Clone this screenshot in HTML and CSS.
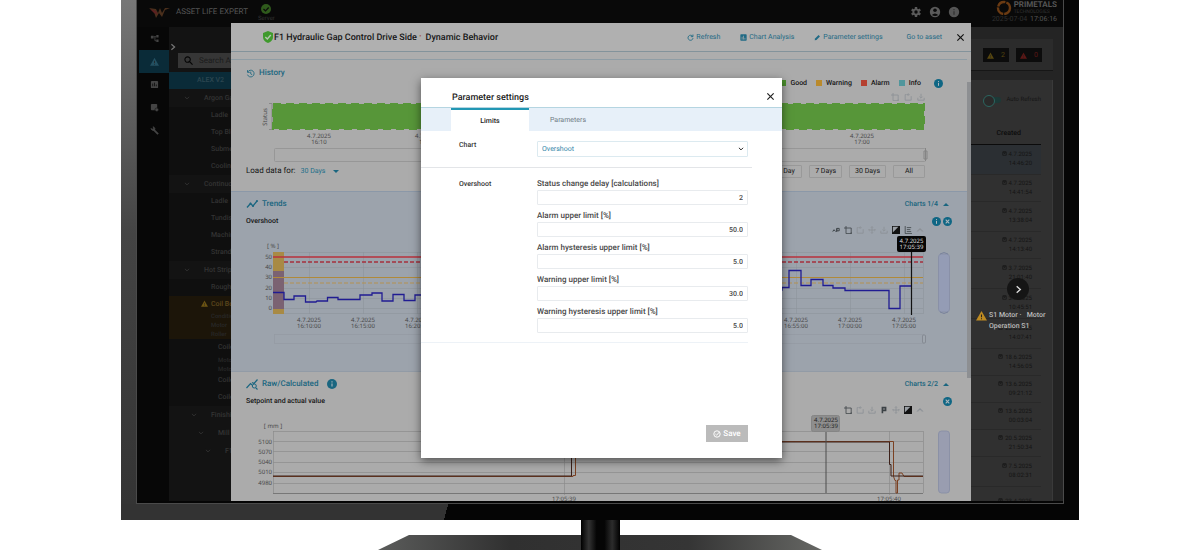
FILE: index.html
```html
<!DOCTYPE html>
<html lang="en">
<head>
<meta charset="utf-8">
<title>Asset Life Expert</title>
<link rel="stylesheet" href="styles.css">
</head>
<body>
<svg class="sprite" aria-hidden="true">
  <symbol id="close" viewBox="0 0 10 10"><path d="M1.5 1.5l7 7m0-7l-7 7" fill="none" stroke="currentColor" stroke-width="1.3"/></symbol>
  <symbol id="closec" viewBox="0 0 10 10"><circle cx="5" cy="5" r="5" fill="currentColor"/><path d="M3 3l4 4m0-4l-4 4" stroke="#b0b8bd" stroke-width="1.2"/></symbol>
  <symbol id="info" viewBox="0 0 10 10"><circle cx="5" cy="5" r="5" fill="currentColor"/><path d="M5 4.4v3.2M5 2.3v1.2" stroke="#b0b8bd" stroke-width="1.1"/></symbol>
  <symbol id="warn" viewBox="0 0 12 12"><path d="M6 1l6 10.500H0z" fill="currentColor"/><path d="M6 5v3M6 9v1.200" stroke="#222" stroke-width="1.100"/></symbol>
  <symbol id="chev" viewBox="0 0 10 10"><path d="M3 1.500L7 5 3 8.500" fill="none" stroke="currentColor" stroke-width="1.500"/></symbol>
  <symbol id="down" viewBox="0 0 10 10"><path d="M1.500 3L5 6.500 8.500 3" fill="none" stroke="currentColor" stroke-width="1.500"/></symbol>
  <symbol id="zoomin" viewBox="0 0 10 10"><path d="M2.500 0v9.500H9V2.500H0M9 8v2" fill="none" stroke="currentColor"/></symbol>
  <symbol id="zoomout" viewBox="0 0 10 10"><path d="M3 2H1.500v7H9V4M4 2h3M5.500 .5L4 2l1.500 1.500" fill="none" stroke="currentColor"/></symbol>
  <symbol id="save" viewBox="0 0 10 10"><path d="M5 1v5M3 4.500L5 6.500l2-2M1 6v3h8V6" fill="none" stroke="currentColor"/></symbol>
  <symbol id="pan" viewBox="0 0 10 10"><path d="M5 1v8M1 5h8M3.800 2L5 .8 6.200 2M3.800 8L5 9.200 6.200 8M2 3.800L.8 5 2 6.200M8 3.800L9.200 5 8 6.200" fill="none" stroke="currentColor"/></symbol>
  <symbol id="contrast" viewBox="0 0 10 10"><rect width="10" height="10" fill="currentColor"/><path d="M1 1h7L1 8z" fill="#9a9fa5"/></symbol>
  <symbol id="list" viewBox="0 0 10 10"><path d="M1.500 0v9.500H10M3.500 2H9M3.500 4.500H8M3.500 7H9" fill="none" stroke="currentColor"/></symbol>
  <symbol id="up" viewBox="0 0 10 10"><path d="M5 2.500L9.500 7H7V6L5 5 3 6v1H.5z" fill="currentColor"/></symbol>
  <symbol id="link" viewBox="0 0 10 10"><path d="M1 7q1-4 3-1t2-3h3v3H6M6 3v4" fill="none" stroke="currentColor" stroke-width="1.200"/></symbol>
  <symbol id="flag" viewBox="0 0 10 10"><path d="M3 9V2h4v3.500H4" fill="none" stroke="currentColor" stroke-width="2"/></symbol>
  <symbol id="cal" viewBox="0 0 10 10"><path d="M1.500 2.500h7v6h-7zM1.500 1.500h7M3.500 5h3" fill="none" stroke="currentColor" stroke-width="1.500"/></symbol>
  <symbol id="trend" viewBox="0 0 12 12"><path d="M1 9.500l3.500-4 2.500 2.500 4-5" fill="none" stroke="currentColor" stroke-width="1.300"/><circle cx="4.500" cy="5.500" r="1" fill="currentColor"/><circle cx="7" cy="8" r="1" fill="currentColor"/><circle cx="11" cy="3" r="1" fill="currentColor"/></symbol>
  <symbol id="raw" viewBox="0 0 12 12"><path d="M.5 10l4-4.500L6 7M6 4.500l2 1 3.500-4M9.800 9.800L11.500 11.500" fill="none" stroke="currentColor" stroke-width="1.200"/><circle cx="8.300" cy="8" r="2" fill="none" stroke="currentColor"/></symbol>
</svg>

<main class="stage">
  <div class="monitor">
    <div class="screen">
      <div class="app">
        <header class="topbar">
          <svg class="brand-mark" viewBox="0 0 22 14"><path d="M0 3l7 1 2 4 2-5 2 5 3-5h5l-5 2-3 7-3-4-3 5-2-6z" fill="#4a2f1c"/><path d="M1 4l6 2 2 4-4-2z" fill="#5c2020"/></svg>
          <h1 class="brand">ASSET LIFE EXPERT</h1>
          <div class="server"><svg viewBox="0 0 10 10"><circle cx="5" cy="5" r="5" fill="#2f5a1c"/><path d="M2.500 5l2 2 3.200-3.500" fill="none" stroke="#0c0c0c" stroke-width="1.200"/></svg><span>Server</span></div>
          <nav class="top-icons">
            <button aria-label="Settings"><svg viewBox="0 0 12 12"><path d="M6 1v10M1.700 3.500l8.600 5M1.700 8.500l8.600-5" stroke="#5a5a5a" stroke-width="2.400"/><circle cx="6" cy="6" r="3.600" fill="#5a5a5a"/><circle cx="6" cy="6" r="1.700" fill="#0a0a0a"/></svg></button>
            <button aria-label="Account"><svg viewBox="0 0 12 12"><circle cx="6" cy="6" r="5.200" fill="#5a5a5a"/><circle cx="6" cy="4.300" r="1.800" fill="#0a0a0a"/><path d="M2.800 9q3.200-3 6.400 0-3 2-6.400 0" fill="#0a0a0a"/></svg></button>
            <button aria-label="Information"><svg viewBox="0 0 12 12"><circle cx="6" cy="6" r="5.200" fill="#555"/><path d="M6 5.300v3.500M6 3v1.300" stroke="#333" stroke-width="1.300"/></svg></button>
          </nav>
          <div class="company">
            <div class="company-row"><svg viewBox="0 0 16 16"><circle cx="8" cy="8" r="6" fill="none" stroke="#6a3a12" stroke-width="2.400" stroke-dasharray="9 1"/></svg><div><b>PRIMETALS</b><small>TECHNOLOGIES</small></div></div>
            <time><span>2025-07-04</span> 17:06:16</time>
          </div>
        </header>
        <div class="workspace">
          <nav class="rail">
            <button aria-label="Structure"><svg viewBox="0 0 10 10"><path d="M1 2h3v3H1zM7 1h2.500v3H7zM7 6h2.500v3H7z" fill="currentColor"/><path d="M4 3h3M5.500 3v4.500H7" fill="none" stroke="currentColor"/></svg></button>
            <button class="on" aria-label="Alarms"><svg viewBox="0 0 12 12"><use href="#warn"/></svg></button>
            <button aria-label="Reports"><svg viewBox="0 0 10 10"><rect x="1" y="1" width="8" height="8" rx="1" fill="currentColor"/><path d="M3 4v3M5 3v4M7 5v2" stroke="#111"/></svg></button>
            <button aria-label="Documents"><svg viewBox="0 0 10 10"><rect x="1" y="1" width="7" height="7" rx="1" fill="currentColor"/><circle cx="7.500" cy="7.500" r="2" fill="currentColor" stroke="#111" stroke-width=".6"/></svg></button>
            <button aria-label="Tools"><svg viewBox="0 0 10 10"><path d="M4 4l5 5" stroke="currentColor" stroke-width="2"/><path d="M1 3l2 2 2-.5.500-2L3.500 .8 4 2.500 3 3.500z" fill="currentColor" stroke="currentColor"/></svg></button>
          </nav>
          <aside class="tree">
            <svg class="expand"><use href="#chev"/></svg>
            <label class="search"><svg viewBox="0 0 10 10"><circle cx="4" cy="4" r="3" fill="none" stroke="#050505" stroke-width="1.200"/><path d="M6.200 6.200L9.500 9.500" stroke="#050505" stroke-width="1.300"/></svg><input type="search" placeholder="Search Asset" aria-label="Search Asset"></label>
            <ul class="nodes">
              <li class="sel">ALEX V2</li>
              <li class="group"><svg><use href="#down"/></svg>Argon Gas</li>
              <li>Ladle</li><li>Top Blow</li><li>Submerged</li><li>Cooling</li>
              <li class="group"><svg><use href="#down"/></svg>Continuous</li>
              <li>Ladle</li><li>Tundish</li><li>Machine</li><li>Strand</li>
              <li class="group"><svg><use href="#down"/></svg>Hot Strip</li>
              <li>Roughing</li>
              <li class="alert"><strong><svg><use href="#warn"/></svg>Coil Box</strong><span>Condition</span><span>Motor</span><span>Roller</span></li>
              <li class="deep multi">Coiler<span>Motor</span><span>Motor</span></li>
              <li class="deep">Coiler</li><li class="deep">Coiler</li>
              <li class="group g2"><svg><use href="#down"/></svg>Finishing</li>
              <li class="group g3"><svg><use href="#down"/></svg>Mill</li>
              <li class="group g4"><svg><use href="#down"/></svg>F1</li>
            </ul>
          </aside>
          <section class="events">
            <div class="counts"><span class="count yellow"><svg><use href="#warn"/></svg>2</span><span class="count red"><svg><use href="#warn"/></svg>0</span></div>
            <div class="event-card">
              <label class="toggle"><input type="checkbox" role="switch">Auto Refresh</label>
              <table>
                <thead><tr><th scope="col">Created</th></tr></thead>
                <tbody>
                  <tr class="tall first"><td><svg><use href="#cal"/></svg>4.7.2025<br>14:46:20</td></tr>
                  <tr><td><svg><use href="#cal"/></svg>4.7.2025<br>14:41:54</td></tr>
                  <tr class="tall"><td><svg><use href="#cal"/></svg>4.7.2025<br>13:38:04</td></tr>
                  <tr><td><svg><use href="#cal"/></svg>4.7.2025<br>14:13:40</td></tr>
                  <tr class="tall"><td><svg><use href="#cal"/></svg>3.7.2025<br>21:01:40</td></tr>
                  <tr class="tall"><td><svg><use href="#cal"/></svg>3.7.2025<br>10:45:51</td></tr>
                  <tr class="tall"><td><svg><use href="#cal"/></svg>25.6.2025<br>14:07:41</td></tr>
                  <tr><td><svg><use href="#cal"/></svg>18.6.2025<br>14:56:05</td></tr>
                  <tr><td><svg><use href="#cal"/></svg>13.6.2025<br>09:21:12</td></tr>
                  <tr><td><svg><use href="#cal"/></svg>13.6.2025<br>00:03:04</td></tr>
                  <tr><td><svg><use href="#cal"/></svg>20.5.2025<br>21:50:34</td></tr>
                  <tr class="tall"><td><svg><use href="#cal"/></svg>7.5.2025<br>08:02:31</td></tr>
                  <tr class="tall"><td><svg><use href="#cal"/></svg>23.4.2025</td></tr>
                </tbody>
              </table>
            </div>
          </section>
        </div>
      </div>

      <section class="behavior">
        <header class="behavior-head">
          <svg class="shield" viewBox="0 0 12 12"><path d="M6 0l5 2v4q0 4-5 6-5-2-5-6V2z" fill="#3f9a2c"/><path d="M3.300 6l2 2 3.500-4" fill="none" stroke="#b5c7b0" stroke-width="1.400"/></svg>
          <h2>F1 Hydraulic Gap Control Drive Side <i>•</i> Dynamic Behavior</h2>
          <div class="actions">
            <button><svg viewBox="0 0 10 10"><path d="M8 3.300A3.600 3.600 0 1 0 8.600 6M8.500 .8v3H5.500" fill="none" stroke="currentColor" stroke-width="1.300"/></svg>Refresh</button>
            <button><svg viewBox="0 0 10 10"><rect x=".5" y=".5" width="9" height="9" rx="1" fill="currentColor"/><path d="M3 4v4M5 2.500V8M7 5.500V8" stroke="#acacac"/></svg>Chart Analysis</button>
            <button><svg viewBox="0 0 10 10"><path d="M1 9l.5-2.500 5-5 2 2-5 5z" fill="currentColor"/></svg>Parameter settings</button>
            <a href="#asset">Go to asset</a>
            <button class="x" aria-label="Close"><svg><use href="#close"/></svg></button>
          </div>
        </header>
        <div class="behavior-body">
          <div class="sections">
            <section class="history">
              <div class="head">
                <h3><svg viewBox="0 0 12 12"><path d="M2.300 4A4.500 4.500 0 1 1 2 7.500M2 1.500V4.500h3M6.300 3.500v3l2 1.200" fill="none" stroke="currentColor" stroke-width="1.100"/></svg>History</h3>
                <ul class="legend"><li class="good">Good</li><li class="warning">Warning</li><li class="alarm">Alarm</li><li class="inf">Info</li><li class="plain"><svg><use href="#info"/></svg></li></ul>
              </div>
              <div class="tools pale"><button aria-label="Zoom"><svg><use href="#zoomin"/></svg></button><button aria-label="Reset zoom"><svg><use href="#zoomout"/></svg></button><button aria-label="Save image"><svg><use href="#save"/></svg></button></div>
              <svg class="chart" viewBox="231 102 736 62">
                <text x="267" y="117" transform="rotate(-90 267 117)" text-anchor="middle">Status</text>
                <path d="M269 103.500h3v26h-3" fill="none" stroke="#888"/>
                <rect x="273" y="104" width="651" height="25" fill="#579639"/>
                <path d="M273 104h651v25H273z" fill="none" stroke="#579639" stroke-width="2" stroke-dasharray="8 5"/>
                <g text-anchor="middle"><text x="319" y="138">4.7.2025</text><text x="319" y="144">16:10</text><text x="427" y="138">4.7.2025</text><text x="427" y="144">16:20</text><text x="862" y="138">4.7.2025</text><text x="862" y="144">17:00</text></g>
                <rect x="274.500" y="148.500" width="651" height="13" rx="1" fill="none" stroke="#979797"/>
                <path d="M925.500 148v13M924 151h3v8h-3z" fill="#aaa" stroke="#858585"/>
              </svg>
              <div class="load"><label for="span">Load data for:</label><select id="span"><option>30 Days</option></select><i class="tri dn"></i><span class="ranges"><button>1 Day</button><button>7 Days</button><button>30 Days</button><button>All</button></span></div>
            </section>

            <section class="trends">
              <div class="head"><h3><svg><use href="#trend"/></svg>Trends</h3><button class="fold">Charts 1/4<i class="tri"></i></button></div>
              <div class="sub"><h4>Overshoot</h4><button aria-label="Information"><svg><use href="#info"/></svg></button><button aria-label="Remove"><svg><use href="#closec"/></svg></button></div>
              <div class="tools"><button aria-label="Link"><svg><use href="#link"/></svg></button><button aria-label="Zoom"><svg><use href="#zoomin"/></svg></button><button class="off" aria-label="Reset"><svg><use href="#zoomout"/></svg></button><button class="off" aria-label="Pan"><svg><use href="#pan"/></svg></button><button class="off" aria-label="Save"><svg><use href="#save"/></svg></button><button class="on" aria-label="Contrast"><svg><use href="#contrast"/></svg></button><button aria-label="List"><svg><use href="#list"/></svg></button><button class="off" aria-label="Up"><svg><use href="#up"/></svg></button></div>
              <svg class="chart" viewBox="231 235 736 112">
                <g text-anchor="middle"><text x="273" y="248">[ % ]</text></g>
                <g text-anchor="end"><text x="272" y="259">50</text><text x="272" y="269">40</text><text x="272" y="279">30</text><text x="272" y="290">20</text><text x="272" y="300">10</text><text x="272" y="310">0</text></g>
                <path d="M273 252.500h650M273 267.500h650M273 288.500h650M273 298.500h650M273 308.500h650M273 313.500h650M309.500 252v62M363.500 252v62M417.500 252v62M796.500 252v62M850.500 252v62M904.500 252v62M923.500 252v62" fill="none" stroke="#8d949c" stroke-width=".6"/>
                <rect x="273" y="252" width="11" height="62" fill="#a88a45"/><rect x="273" y="271" width="11" height="38" fill="#7b6272"/>
                <path d="M273 257h650" stroke="#b8303c" stroke-width="1.500"/><path d="M284 262h639" stroke="#a5303c" stroke-width="1.300" stroke-dasharray="4 2"/>
                <path d="M273 277.500h650" stroke="#b08a3a" stroke-width="1.200"/><path d="M284 283h639" stroke="#b39150" stroke-width="1.200" stroke-dasharray="4 2"/>
                <path d="M273 292.500h11v7h10V296h11.500v6H316l1-1h10.500v-3.500H338v2h22V295h12v-2h10v8h11v-6.500h11v6h11V295h10V290h357v-2.500h7v-17h12v15h10v-6h12v6h10v2.500h12v2.500h44v18h11V286h11" fill="none" stroke="#201c92" stroke-width="1.300"/>
                <path d="M911.500 250v65" stroke="#111" stroke-width="1.200"/>
                <rect x="897" y="236" width="29" height="16" rx="2" fill="#060606"/>
                <g text-anchor="middle" class="tip"><text x="911.500" y="243">4.7.2025</text><text x="911.500" y="249">17:05:39</text></g>
                <g text-anchor="middle"><text x="309" y="322">4.7.2025</text><text x="309" y="328">16:10:00</text><text x="363" y="322">4.7.2025</text><text x="363" y="328">16:15:00</text><text x="417" y="322">4.7.2025</text><text x="417" y="328">16:20:00</text><text x="796" y="322">4.7.2025</text><text x="796" y="328">16:55:00</text><text x="850" y="322">4.7.2025</text><text x="850" y="328">17:00:00</text><text x="904" y="322">4.7.2025</text><text x="904" y="328">17:05:00</text></g>
                <rect x="274.500" y="334.500" width="649" height="9" fill="none" stroke="#949ba3" stroke-width=".8"/><rect x="922.500" y="335" width="3" height="8" rx="1" fill="#9fa6ae" stroke="#7a8088" stroke-width=".7"/>
                <rect x="938.500" y="254" width="11" height="58" rx="3" fill="#949cb5" stroke="#858da5" stroke-width=".8"/><path d="M940 254q4-3 8 0M940 312q4 3 8 0" fill="none" stroke="#7a839c"/>
              </svg>
            </section>

            <section class="rawdata">
              <div class="head"><h3><svg><use href="#raw"/></svg>Raw/Calculated<svg class="help"><use href="#info"/></svg></h3><button class="fold">Charts 2/2<i class="tri"></i></button></div>
              <div class="sub"><h4>Setpoint and actual value</h4><button aria-label="Remove"><svg><use href="#closec"/></svg></button></div>
              <div class="tools"><button aria-label="Zoom"><svg><use href="#zoomin"/></svg></button><button class="off" aria-label="Reset"><svg><use href="#zoomout"/></svg></button><button class="off" aria-label="Save"><svg><use href="#save"/></svg></button><button aria-label="Marker"><svg><use href="#flag"/></svg></button><button class="off" aria-label="Pan"><svg><use href="#pan"/></svg></button><button class="on" aria-label="Contrast"><svg><use href="#contrast"/></svg></button><button class="off" aria-label="Up"><svg><use href="#up"/></svg></button></div>
              <svg class="chart" viewBox="231 415 736 89">
                <text x="273" y="428" text-anchor="middle">[ mm ]</text>
                <g text-anchor="end"><text x="272" y="444">5100</text><text x="272" y="454">5070</text><text x="272" y="464">5040</text><text x="272" y="474">5010</text><text x="272" y="485">4980</text></g>
                <path d="M273 431.500h650M273 441.500h650M273 451.500h650M273 462.500h650M273 472.500h650M273 483.500h650M273.500 431v62M564.500 431v64M889.500 431v64M923.500 431v62" fill="none" stroke="#8b8b8b" stroke-width=".7"/><path d="M273 493.500h650" stroke="#777"/>
                <path d="M273 476.500h300v-1h2.500v-34H893.500v35l1.500 4h1v12.500h1.500V480h1.500v-7h3l2 3.500h19" fill="none" stroke="#7b4122" stroke-width="1"/>
                <path d="M273 476h298.500v-34H889.500v22.500h1.500V476h32" fill="none" stroke="#3c2019" stroke-width="1"/>
                <path d="M826 431v62" stroke="#4c4c4c"/><rect x="811.500" y="415.500" width="28" height="16" rx="2" fill="#8e8e8e" stroke="#858585"/>
                <g text-anchor="middle"><g class="dark"><text x="826" y="422">4.7.2025</text><text x="826" y="428">17:05:39</text></g><text x="564" y="501">17:05:39</text><text x="889" y="501">17:05:40</text></g>
                <rect x="938.500" y="431" width="11" height="62" rx="3" fill="#999db0" stroke="#858da5" stroke-width=".8"/>
              </svg>
            </section>
          </div>
          <div class="scroll"></div>
        </div>
      </section>

      <div class="next">
        <button aria-label="Next asset"><svg><use href="#chev"/></svg></button>
        <p><svg><use href="#warn"/></svg><span>S1 Motor <i>·</i> &nbsp; Motor Operation S1</span></p>
      </div>

      <form class="modal" role="dialog" aria-labelledby="mt">
        <header><h2 id="mt">Parameter settings</h2><button type="button" aria-label="Close"><svg><use href="#close"/></svg></button></header>
        <div class="tabs" role="tablist"><button type="button" role="tab" aria-selected="true">Limits</button><button type="button" role="tab" aria-selected="false">Parameters</button></div>
        <div class="pick"><label for="chart">Chart</label><div class="selectbox"><select id="chart"><option>Overshoot</option></select><svg><use href="#down"/></svg></div></div>
        <fieldset>
          <legend>Overshoot</legend>
          <div class="fields">
            <label>Status change delay [calculations]<input value="2"></label>
            <label>Alarm upper limit [%]<input value="50.0"></label>
            <label>Alarm hysteresis upper limit [%]<input value="5.0"></label>
            <label>Warning upper limit [%]<input value="30.0"></label>
            <label>Warning hysteresis upper limit [%]<input value="5.0"></label>
          </div>
        </fieldset>
        <footer><button type="button"><svg viewBox="0 0 10 10"><circle cx="5" cy="5" r="4" fill="none" stroke="currentColor" stroke-width="1.200"/><path d="M3 5l1.500 1.500L8 2.500" fill="none" stroke="currentColor" stroke-width="1.200"/></svg>Save</button></footer>
      </form>
    </div>
    <div class="chin"></div>
  </div>
  <svg class="stand" viewBox="0 0 444 30">
    <defs>
      <linearGradient id="base"><stop offset="0" stop-color="#5b5c5b"/><stop offset=".3" stop-color="#303030"/><stop offset=".7" stop-color="#353535"/><stop offset="1" stop-color="#666764"/></linearGradient>
      <linearGradient id="neck"><stop offset="0" stop-color="#000"/><stop offset=".2" stop-color="#333"/><stop offset=".4" stop-color="#050505"/><stop offset=".6" stop-color="#050505"/><stop offset=".8" stop-color="#2c2c2c"/><stop offset="1" stop-color="#000"/></linearGradient>
    </defs>
    <path d="M0 30l31-15h382l31 15z" fill="url(#base)"/><path d="M203 0h39v30h-39z" fill="url(#neck)"/>
  </svg>
</main>
</body>
</html>
```
FILE: styles.css
```css
* { box-sizing: border-box; }
body { margin: 0; background: #fff; font-family: Roboto, "Open Sans", sans-serif; font-size: 7px; line-height: 8px; text-rendering: geometricPrecision; }
h1, h2, h3, h4, p, ul, fieldset { margin: 0; padding: 0; border: 0; list-style: none; font-weight: 500; }
button, input, select { font: inherit; color: inherit; margin: 0; padding: 0; border: 0; background: none; appearance: none; text-rendering: inherit; }
button, a { cursor: pointer; text-decoration: none; }
svg { display: block; flex: none; }
i { font-style: normal; }
.sprite { position: absolute; width: 0; height: 0; }

.stage { height: 100vh; display: flex; flex-direction: column; overflow: hidden; }
.monitor { flex: 1; min-height: 0; margin: 0 121px; padding: 0 15px; display: flex; flex-direction: column; background: linear-gradient(90deg, #3c3c3c, #555 15px, #050505 16px); position: relative; }
.monitor::before { content: ""; position: absolute; left: 0; top: 0; bottom: 0; width: 15px; background: linear-gradient(#777, #444 45%, #333); }
.screen { flex: 1; min-height: 0; display: grid; grid-template: minmax(0, 1fr) / minmax(0, 1fr); position: relative; border: solid #4a4a4a; border-width: 0 1px 1px; background: #050505; overflow: hidden; padding-bottom: 2px; }
.screen > * { grid-area: 1 / 1; }
.chin { height: 16px; margin: 0 -15px; position: relative; background: linear-gradient(105deg, #333 34%, #050505 34%); }
.stand { width: 444px; height: 30px; align-self: center; }

.app { display: flex; flex-direction: column; min-height: 0; overflow: hidden; color: #333; background: #0b0b0b; }
.topbar { height: 27px; flex: none; display: flex; background: #090909; padding: 0 6px 0 12px; }
.brand-mark { width: 22px; height: 14px; margin-top: 5px; }
.brand { font-size: 8px; font-weight: 400; color: #555; margin: 8px 0 0 5px; }
.server { margin: 4px 0 0 10px; font-size: 6px; display: flex; flex-direction: column; align-items: center; gap: 1px; }
.server svg { width: 10px; height: 10px; }
.top-icons { display: flex; gap: 7px; margin: 6px 0 0 auto; height: 12px; }
.top-icons svg { width: 12px; height: 12px; }
.company { width: 68px; margin-left: 29px; color: #555; text-align: right; }
.company-row { display: flex; justify-content: flex-end; gap: 2px; height: 15px; overflow: hidden; text-align: left; }
.company-row svg { width: 16px; height: 16px; }
.company b { display: block; font-size: 8px; line-height: 8px; padding-top: 1px; }
.company small { display: block; font-size: 5px; line-height: 7px; color: #333; }
.company time { font-size: 7px; }
.company time span { color: #303030; margin-right: 1px; }
.workspace { flex: 1; min-height: 0; display: flex; }
.rail { width: 32px; padding-left: 2px; background: #070707; color: #444; flex: none; }
.rail button { display: grid; place-items: center; width: 100%; height: 23px; }
.rail svg { width: 9px; height: 9px; }
.rail .on { background: #0a2b38; color: #235061; }
.tree { width: 170px; background: #131313; }
.expand { width: 8px; height: 8px; color: #777; margin-top: 16px; }
.search { display: flex; align-items: center; gap: 6px; height: 15px; margin: 2px 0 4px 9px; padding-left: 6px; background: #363636; }
.search svg { width: 9px; height: 9px; }
.search input { width: 80px; font-size: 8px; }
.search input::placeholder { color: #1c1c1c; opacity: 1; }
.nodes li { height: 17px; line-height: 17px; padding-left: 42px; background: #0f0f0f; }
.nodes .sel { background: #0a2b38; padding-left: 28px; color: #2c4650; }
.nodes .group { display: flex; align-items: center; height: 18px; gap: 14px; padding-left: 15px; background: #131313; }
.nodes .g2 { padding-left: 22px; }
.nodes .g3 { padding-left: 29px; }
.nodes .g4 { padding-left: 36px; }
.nodes .group svg { width: 6px; height: 6px; }
.nodes .alert { height: 43px; background: #1c1509; font-size: 6px; line-height: 9px; color: #352817; }
.nodes .alert strong { display: flex; gap: 3px; font-size: 7px; line-height: 16px; font-weight: 500; color: #5c481d; margin-left: -10px; }
.nodes .alert svg { width: 7px; height: 7px; margin-top: 4px; color: #6d5412; }
.nodes .deep { padding-left: 49px; }
.nodes .multi { height: 33px; }
.nodes span { display: block; line-height: 9px; font-size: 6px; color: #282828; }
.events { flex: 1; padding: 12px 10px 0 0; background: #242424; }
.counts { height: 32px; display: flex; gap: 7px; justify-content: flex-end; padding: 9px 11px 0 0; background: #2b2b2b; border-bottom: 1px solid #161616; }
.count { width: 26px; height: 14px; display: flex; align-items: center; justify-content: center; gap: 7px; background: #0c0c0c; }
.count svg { width: 7px; height: 7px; }
.yellow { color: #57460f; }
.red { color: #5c1715; }
.event-card { margin-top: 9px; padding: 16px 11px 0 0; background: #303030; height: 100%; border-right: 1px solid #3a3a3a; }
.toggle { display: flex; gap: 5px; justify-content: flex-end; font-size: 6px; align-items: center; color: #151515; }
.toggle input { width: 16px; height: 6px; border-radius: 3px; background: #1c3a38; position: relative; }
.toggle input::before { content: ""; position: absolute; left: -2px; top: -2px; width: 10px; height: 10px; border: 1px solid #2b6660; border-radius: 50%; background: #2a2a2a; }
.events table { width: 100%; margin-top: 15px; border-collapse: collapse; text-align: right; color: #151515; }
.events th { height: 25px; padding: 4px 20px 0 0; font-weight: 500; color: #0c0c0c; border-bottom: 1px solid #0b0b0b; }
.events td { height: 27px; padding: 0 9px 0 0; font-size: 6px; line-height: 9px; vertical-align: middle; border-bottom: 1px solid #292929; }
.events .tall td { height: 30px; }
.events .first td { background: #2b2f33; }
.events td svg { display: inline-block; width: 5px; height: 5px; margin-right: 2px; }

.behavior { margin: 23px 92px 0 94px; display: flex; flex-direction: column; min-height: 0; overflow: hidden; background: #ababab; color: #161616; }
.behavior-head { height: 29px; flex: none; display: flex; align-items: center; padding: 0 6px 0 31px; background: #b0b0b0; border-bottom: 1px solid #83939b; }
.shield { width: 12px; height: 12px; }
.behavior-head h2 { font-size: 9px; line-height: 12px; }
.behavior-head h2 i { font-size: 6px; color: #a04b2a; margin-right: 2px; vertical-align: 2px; }
.actions { margin-left: auto; display: flex; align-items: center; gap: 20px; color: #1f6a85; }
.actions button { display: flex; align-items: center; gap: 2px; }
.actions svg { width: 7px; height: 7px; }
.actions a { color: inherit; margin-left: 4px; }
.actions .x { color: #111; margin-left: -6px; }
.actions .x svg { width: 9px; height: 9px; }
.behavior-body { flex: 1; min-height: 0; display: flex; border-top: 7px solid #adadad; }
.sections { flex: 1; min-width: 0; overflow: hidden; border-top: 1px solid #8f9da5; }
.scroll { width: 4px; height: 67%; margin-top: 23px; background: #8d8f92; }
.head { display: flex; justify-content: space-between; padding: 0 18px 0 15px; }
.head h3 { display: flex; align-items: center; gap: 4px; font-size: 8px; line-height: 12px; height: 12px; color: #1a6680; }
.head h3 svg { width: 12px; height: 12px; }
.head h3 .help { width: 10px; height: 10px; margin-left: 5px; }
.history { height: 132px; border-bottom: 1px solid #8b98a8; }
.history .head { height: 28px; padding: 7px 24px 0 15px; }
.history .head svg { width: 9px; height: 9px; }
.legend { display: flex; align-items: center; gap: 9px; align-self: flex-end; font-weight: 500; height: 10px; }
.legend li { display: flex; align-items: center; gap: 4px; font-weight: 500; }
.legend li::before { content: ""; width: 6px; height: 6px; background: var(--key); }
.good { --key: #4b8f2d; }
.warning { --key: #ba8a2c; }
.alarm { --key: #b54030; }
.inf { --key: #51969c; }
.legend .plain { margin-left: 4px; }
.legend .plain::before { display: none; }
.legend .plain svg { color: #0f6684; }
.tools { display: flex; justify-content: flex-end; align-items: center; gap: 4px; height: 10px; margin-top: -2px; padding-right: 43px; color: #3c4246; }
.tools svg { width: 8px; height: 8px; }
.tools .off, .pale { color: #8b9096; }
.tools .on { color: #111; }
.pale { margin-top: 4px; gap: 5px; padding-right: 42px; }
.chart { width: 100%; height: auto; font-family: "Noto Sans", sans-serif; font-size: 6px; }
.chart text { fill: #484848; }
.chart .tip text { fill: #ddd; }
.chart .dark text { fill: #222; }
.load { display: flex; align-items: center; height: 14px; padding: 0 42px 0 15px; font-size: 8px; gap: 4px; }
.load select { font-size: 7px; color: #226f8a; width: 28px; margin-left: 1px; }
.ranges { display: flex; gap: 7px; margin-left: auto; }
.ranges button { height: 13px; padding: 0 5px; min-width: 32px; font-size: 7px; border: 1px solid #999; border-radius: 1px; }
.tri { display: inline-block; border: 3px solid transparent; border-top-width: 0; border-bottom-color: #1a6680; }
.tri.dn { border-top: 3px solid #1a6680; border-bottom-width: 0; }
.trends { height: 180px; padding-top: 6px; background: #9ca3ac; border-bottom: 1px solid #929ba6; }
.rawdata { padding-top: 6px; }
.fold { display: flex; align-items: center; gap: 5px; font-weight: 500; color: #17647d; }
.sub { display: flex; align-items: center; gap: 2px; height: 12px; margin-top: 5px; padding: 0 15px; }
.sub h4 { margin-right: auto; font-size: 7px; }
.sub button { color: #0f6684; }
.sub svg { width: 9px; height: 9px; }

.next { justify-self: end; align-self: start; width: 92px; margin-top: 278px; color: #bbb; }
.next button { display: grid; place-items: center; width: 22px; height: 22px; margin-left: 36px; border-radius: 50%; background: #151515; }
.next button svg { width: 9px; height: 9px; color: #ddd; }
.next p { display: flex; gap: 2px; margin-top: 10px; padding: 0 12px 0 5px; line-height: 11px; }
.next p svg { width: 11px; height: 11px; color: #bd8a22; }

.modal { justify-self: center; align-self: start; width: 361px; min-height: 380px; margin: 78px 0 0 3px; display: flex; flex-direction: column; background: #fff; color: #333; box-shadow: 0 3px 9px #0008; }
.modal header { height: 29px; padding: 7px 7px 0 31px; display: flex; justify-content: space-between; }
.modal h2 { font-size: 9px; line-height: 12px; margin-top: 7px; color: #222; }
.modal header svg { width: 9px; height: 9px; color: #222; }
.tabs { display: flex; height: 24px; padding-left: 30px; background: #e7f0f9; border-top: 1px solid #b5d5e1; }
.tabs button { width: 78px; color: #6f7b84; }
.tabs [aria-selected="true"] { background: #fff; color: #222; font-weight: 500; border-top: 2px solid #2297b4; }
.pick { display: flex; height: 37px; margin-right: 30px; padding: 10px 4px 0 38px; border-bottom: 1px solid #e3e5e8; }
.pick label { width: 78px; font-weight: 500; }
.selectbox { flex: 1; display: flex; align-items: center; height: 16px; padding: 0 3px 0 4px; border: 1px solid #dceaf0; border-radius: 1px; }
.selectbox select { flex: 1; color: #3386a8; }
.selectbox svg { width: 6px; height: 6px; color: #111; }
.modal fieldset { position: relative; display: flex; padding: 10px 0 9px 38px; margin-right: 34px; border-bottom: 1px solid #edf2f7; }
.modal legend { float: left; width: 78px; padding: 2px 0 0; font-weight: 500; line-height: 8px; }
.fields { flex: 1; display: grid; gap: 5px; font-size: 8px; line-height: 12px; color: #484848; }
.fields input { display: block; width: 100%; height: 15px; padding: 0 4px; border: 1px solid #e8ebee; border-radius: 1px; text-align: right; font-size: 7px; }
.modal footer { margin-top: auto; padding: 0 34px 16px 0; display: flex; justify-content: flex-end; }
.modal footer button { display: flex; align-items: center; justify-content: center; gap: 2px; width: 42px; height: 17px; font-size: 8px; font-weight: 500; background: #bbb; color: #fff; }
.modal footer svg { width: 8px; height: 8px; }
```
